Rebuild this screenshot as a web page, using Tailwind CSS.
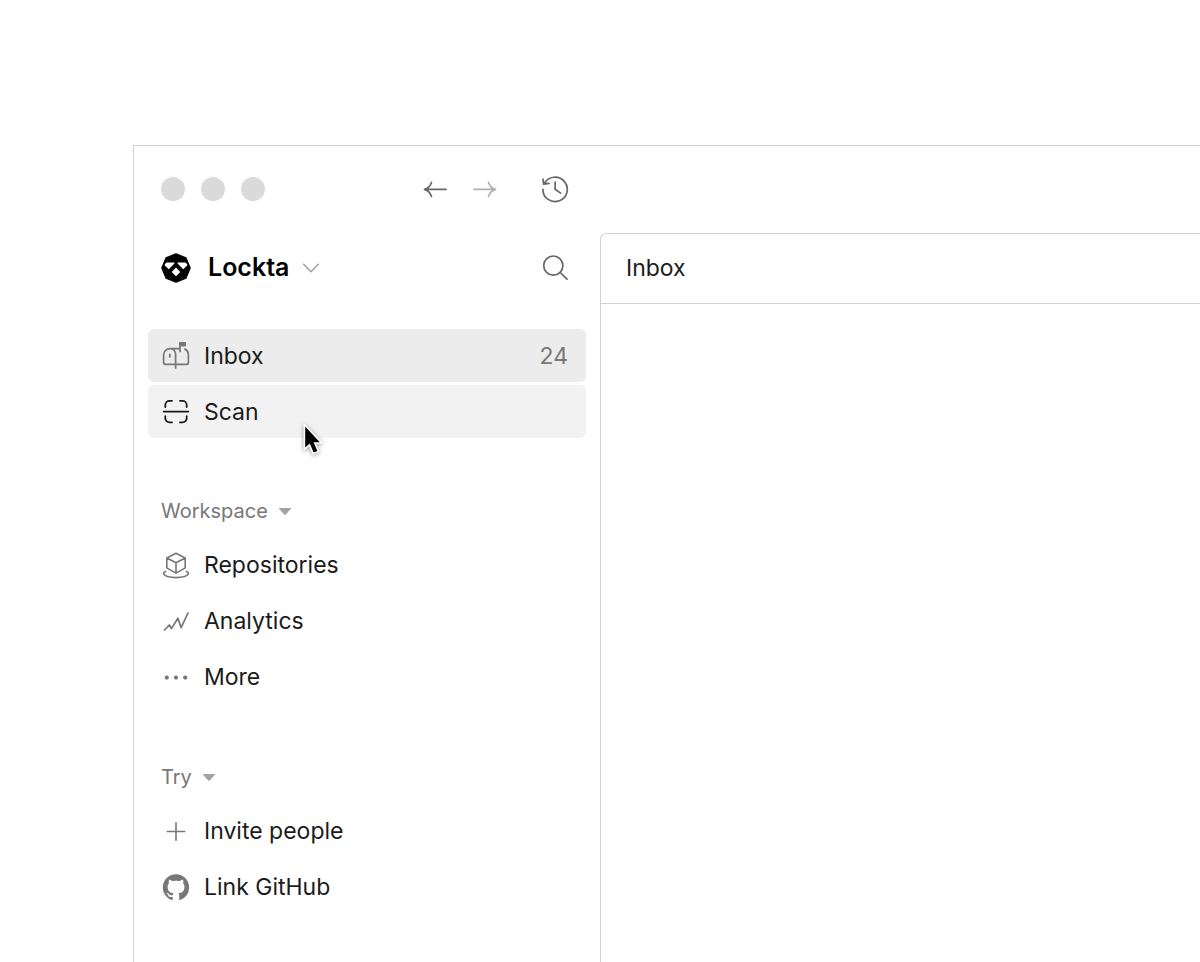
<!DOCTYPE html>
<html lang="en">
<head>
  <meta charset="UTF-8">
  <meta name="viewport" content="width=device-width, initial-scale=1.0">
  <title>Lockta</title>
  <script src="https://cdn.jsdelivr.net/npm/@tailwindcss/browser@4"></script>
</head>
<body class="bg-white font-['Inter',sans-serif] text-[#1b1b1b] overflow-hidden">
  <div class="flex min-h-screen pl-[133px] pt-[145px]">
    <div class="flex flex-1 flex-col border-l border-t border-[#d2d2d2]">

      <!-- Title bar -->
      <header class="flex h-[87px] items-center pb-px">
        <div class="flex w-[466px] items-center pl-[27px] pr-[31px]">
          <div class="flex gap-4">
            <span class="size-6 rounded-full bg-[#dadada]"></span>
            <span class="size-6 rounded-full bg-[#dadada]"></span>
            <span class="size-6 rounded-full bg-[#dadada]"></span>
          </div>
          <div class="ml-auto flex items-center">
            <button type="button" aria-label="Back" class="mr-6 text-[#666]">
              <svg class="size-[26px]" viewBox="0 0 26 26" fill="none" stroke="currentColor" stroke-width="1.7" stroke-linecap="round" stroke-linejoin="round"><path d="M24 13.4H2.5M9.5 6.4C8.3 10 5.8 12.4 2.5 13.4C5.8 14.4 8.3 16.8 9.5 20.4"/></svg>
            </button>
            <button type="button" aria-label="Forward" class="mr-[43px] text-[#b0b0b0]">
              <svg class="size-[26px]" viewBox="0 0 26 26" fill="none" stroke="currentColor" stroke-width="1.7" stroke-linecap="round" stroke-linejoin="round"><path d="M2 13.4H23.5M16.5 6.4C17.7 10 20.2 12.4 23.5 13.4C20.2 14.4 17.7 16.8 16.5 20.4"/></svg>
            </button>
            <button type="button" aria-label="History" class="text-[#666]">
              <svg class="size-7" viewBox="0 0 28 28" fill="none" stroke="currentColor" stroke-width="1.7" stroke-linecap="round" stroke-linejoin="round"><path d="M1.9 14.3A12.2 12.2 0 1 0 3.4 8.5M2 4.2L2.6 9.2L8 8.4M14.1 7V14.3L19.6 18.1"/></svg>
            </button>
          </div>
        </div>
      </header>

      <div class="flex flex-1">
        <!-- Sidebar -->
        <aside class="w-[466px] shrink-0 px-[14px]">
          <div class="flex h-[70px] items-center pl-[13px] pr-[17px]">
            <button type="button" class="flex items-center text-[25px] font-semibold text-black">
              <svg class="mr-[17px] size-[30px]" viewBox="0 0 30 30"><path d="M15 .8L25 4.9L29.2 15L25 25.1L15 29.2L5 25.1L.8 15L5 4.9Z" fill="#000" stroke="#000" stroke-width="1.2" stroke-linejoin="round"/><path d="M3.8 11.2L5.6 9.4H13.4V10.6L7.8 16.2L3.8 12.6ZM26.2 11.2L24.4 9.4H16.6V10.6L22.2 16.2L26.2 12.6ZM15 14.6L19.3 18.9L15 23.2L10.7 18.9Z" fill="#fff"/></svg>
              Lockta
              <svg class="ml-[13px] size-[18px] text-[#a3a3a3]" viewBox="0 0 18 18" fill="none" stroke="currentColor" stroke-width="1.6" stroke-linecap="round" stroke-linejoin="round"><path d="M1.7 5.3L9 12.7L16.3 5.3"/></svg>
            </button>
            <button type="button" aria-label="Search" class="ml-auto text-[#666]">
              <svg class="size-7" viewBox="0 0 28 28" fill="none" stroke="currentColor" stroke-width="1.7" stroke-linecap="round"><circle cx="12.3" cy="11.6" r="9.6"/><path d="M19.2 18.5L26 25.2"/></svg>
            </button>
          </div>

          <nav class="mt-[26px] text-[23px]">
            <div class="flex flex-col gap-[3px]">
              <a href="#" class="flex h-[53px] items-center rounded-md bg-[#ececec] pl-[14px] pr-[18px] pt-px">
                <svg class="mr-[14px] size-7 text-[#777]" viewBox="0 0 28 28" fill="none" stroke="currentColor" stroke-width="1.7" stroke-linecap="round" stroke-linejoin="round"><path d="M13.6 26V12.2A5.4 5.6 0 0 0 8.2 6.6H7.9A6.4 6.4 0 0 0 1.6 13V20.4A2 2 0 0 0 3.6 22.4H24.4A2 2 0 0 0 26.4 20.4V13C26.4 10.2 24.9 8 22.8 7.1M8.2 6.6H18V9.6M18 6.6V1M7.8 12.4V15"/><path d="M18 .9H23.2V3.6H18Z" fill="currentColor"/></svg>
                Inbox
                <span class="ml-auto text-[#777]">24</span>
              </a>
              <a href="#" class="flex h-[53px] items-center rounded-md bg-[#f2f2f2] pl-[14px] pr-[18px] pt-px">
                <svg class="mr-[14px] size-7 text-[#1b1b1b]" viewBox="0 0 28 28" fill="none" stroke="currentColor" stroke-width="1.8" stroke-linecap="round"><path d="M1.6 13.6H26.4M3.3 9.1V7A4.2 4.2 0 0 1 7.5 2.8H10M18 2.8H20.5A4.2 4.2 0 0 1 24.7 7V9.1M24.7 18.1V20.2A4.2 4.2 0 0 1 20.5 24.4H18M10 24.4H7.5A4.2 4.2 0 0 1 3.3 20.2V18.1"/></svg>
                Scan
              </a>
            </div>

            <button type="button" class="mt-[47px] flex h-[54px] items-center pb-[2px] pl-[13px] text-xl text-[#777]">
              Workspace
              <svg class="ml-[9px] size-4" viewBox="0 0 16 16" fill="#a3a3a3"><path d="M2.6 5H13.4Q14.5 5 13.7 5.9L9 11.3Q8 12.3 7 11.3L2.3 5.9Q1.5 5 2.6 5Z"/></svg>
            </button>
            <div class="flex flex-col gap-[3px]">
              <a href="#" class="flex h-[53px] items-center rounded-md pl-[14px] pr-[18px]">
                <svg class="mr-[14px] size-7 text-[#777]" viewBox="0 0 28 28" fill="none" stroke="currentColor" stroke-width="1.6" stroke-linecap="round" stroke-linejoin="round"><path d="M14 1.2L23.2 6V15.9L14 21.1L4.8 15.9V6ZM4.8 6L14 10.8L23.2 6M14 10.8V21.1M3.6 19.6C1.8 20.4 1.2 21.2 1.8 22.2C3 24.2 8 25.6 14 25.6S25 24.2 26.2 22.2C26.8 21.2 26.2 20.4 24.4 19.6"/></svg>
                Repositories
              </a>
              <a href="#" class="flex h-[53px] items-center rounded-md pl-[14px] pr-[18px]">
                <svg class="mr-[14px] size-7 text-[#777]" viewBox="0 0 28 28" fill="none" stroke="currentColor" stroke-width="1.7" stroke-linecap="round" stroke-linejoin="round"><path d="M2.4 22L7.4 17L9.4 20.6L15.9 10.2L19.1 19.6L26 5"/></svg>
                Analytics
              </a>
              <a href="#" class="flex h-[53px] items-center rounded-md pl-[14px] pr-[18px]">
                <svg class="mr-[14px] size-7 text-[#777]" viewBox="0 0 28 28" fill="currentColor"><circle cx="4.8" cy="13.6" r="2.1"/><circle cx="14" cy="13.6" r="2.1"/><circle cx="23.2" cy="13.6" r="2.1"/></svg>
                More
              </a>
            </div>

            <button type="button" class="mt-[47px] flex h-[54px] items-center pb-[2px] pl-[13px] text-xl text-[#777]">
              Try
              <svg class="ml-[9px] size-4" viewBox="0 0 16 16" fill="#a3a3a3"><path d="M2.6 5H13.4Q14.5 5 13.7 5.9L9 11.3Q8 12.3 7 11.3L2.3 5.9Q1.5 5 2.6 5Z"/></svg>
            </button>
            <div class="flex flex-col gap-[3px]">
              <a href="#" class="flex h-[53px] items-center rounded-md pl-[14px] pr-[18px]">
                <svg class="mr-[14px] size-7 text-[#777]" viewBox="0 0 28 28" fill="none" stroke="currentColor" stroke-width="1.6" stroke-linecap="round"><path d="M14 4.8V22.2M5.3 13.5H22.7"/></svg>
                Invite people
              </a>
              <a href="#" class="flex h-[53px] items-center rounded-md pl-[14px] pr-[18px]">
                <svg class="mr-[14px] size-7 text-[#777]" viewBox="-.5 -.2 17 17" fill="currentColor"><path d="M8 0C3.58 0 0 3.58 0 8c0 3.54 2.29 6.53 5.47 7.59.4.07.55-.17.55-.38 0-.19-.01-.82-.01-1.49-2.01.37-2.53-.49-2.69-.94-.09-.23-.48-.94-.82-1.13-.28-.15-.68-.52-.01-.53.63-.01 1.08.58 1.23.82.72 1.21 1.87.87 2.33.66.07-.52.28-.87.51-1.07-1.78-.2-3.64-.89-3.64-3.95 0-.87.31-1.59.82-2.15-.08-.2-.36-1.02.08-2.12 0 0 .67-.21 2.2.82.64-.18 1.32-.27 2-.27s1.36.09 2 .27c1.53-1.04 2.2-.82 2.2-.82.44 1.1.16 1.92.08 2.12.51.56.82 1.27.82 2.15 0 3.07-1.87 3.75-3.65 3.95.29.25.54.73.54 1.48 0 1.07-.01 1.93-.01 2.2 0 .21.15.46.55.38A8.01 8.01 0 0 0 16 8c0-4.42-3.58-8-8-8z"/></svg>
                Link GitHub
              </a>
            </div>
          </nav>
        </aside>

        <!-- Content -->
        <main class="flex-1 rounded-tl-md border-l border-t border-[#d2d2d2]">
          <div class="flex h-[70px] items-center border-b border-[#d2d2d2] px-[25px]">
            <h1 class="text-[23px]">Inbox</h1>
          </div>
        </main>
      </div>
    </div>
  </div>

  <!-- Mouse pointer -->
  <svg class="pointer-events-none absolute left-[300px] top-[421px] h-10 w-7 drop-shadow-sm drop-shadow-black/40" viewBox="0 0 28 40"><path d="M5.2 5.6V26.6L9.8 22.4L13.6 31.6L17.4 30L13.6 21.2H19.8Z" fill="#000" stroke="#fff" stroke-width="3.2" paint-order="stroke"/></svg>
</body>
</html>
